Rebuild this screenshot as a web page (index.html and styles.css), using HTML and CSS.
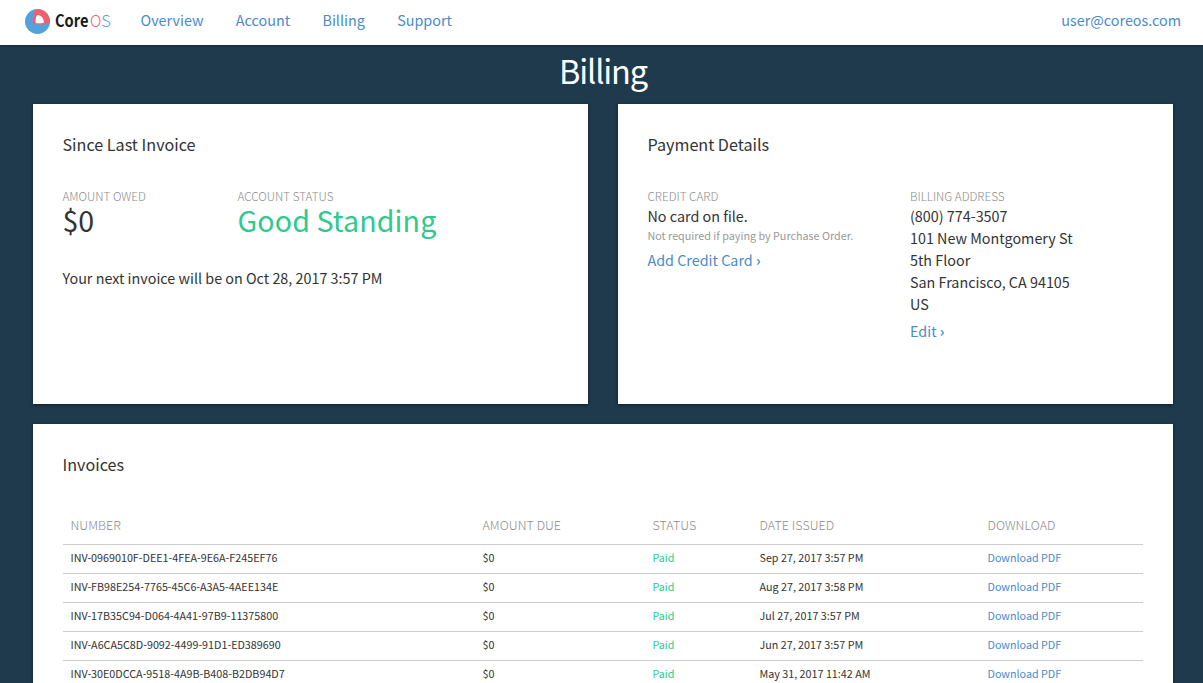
FILE: index.html
```html
<!DOCTYPE html>
<html lang="en">
<head>
<meta charset="utf-8">
<title>Billing</title>
<link rel="stylesheet" href="styles.css">
</head>
<body>
<header class="topbar">
  <svg class="logo" width="90" height="30" viewBox="0 0 90 30" role="img" aria-label="CoreOS">
    <circle cx="12.5" cy="15.5" r="12.5" fill="#53a3da"/>
    <path d="M12.500 3C9.500 3 7.500 9 7.500 17.800C13.500 19 20 18.500 24.800 17.200A12.500 12.500 0 0 0 12.500 3Z" fill="#f1606d"/>
    <path d="M12.300 9C11 9.500 10.600 13.500 10.700 17.100C13.500 17.500 16.500 17.300 18.800 16.700C19 12.500 16 8.800 12.300 9Z" fill="#fff"/>
    <text class="logo-core" x="30" y="21.300" textLength="33.500" lengthAdjust="spacingAndGlyphs">Core</text>
    <text class="logo-o" x="65" y="21.300" textLength="11.300" lengthAdjust="spacingAndGlyphs">O</text>
    <text class="logo-s" x="76.300" y="21.300">S</text>
  </svg>
  <nav class="nav">
    <a>Overview</a>
    <a>Account</a>
    <a>Billing</a>
    <a>Support</a>
  </nav>
  <a class="user">user@coreos.com</a>
</header>
<main class="page">
  <h1 class="title">Billing</h1>
  <div class="cards">
    <section class="card">
      <h2 class="card-title">Since Last Invoice</h2>
      <div class="summary">
        <div><div class="label">AMOUNT OWED</div><div class="big">$0</div></div>
        <div><div class="label">ACCOUNT STATUS</div><div class="big good">Good Standing</div></div>
      </div>
      <p class="next">Your next invoice will be on Oct 28, 2017 3:57 PM</p>
    </section>
    <section class="card">
      <h2 class="card-title">Payment Details</h2>
      <div class="payment">
        <div>
          <div class="label">CREDIT CARD</div>
          <div class="text">No card on file.</div>
          <div class="note">Not required if paying by Purchase Order.</div>
          <a class="link add">Add Credit Card <span class="chevron">›</span></a>
        </div>
        <div>
          <div class="label">BILLING ADDRESS</div>
          <div class="text">(800) 774-3507<br>101 New Montgomery St<br>5th Floor<br>San Francisco, CA 94105<br>US</div>
          <a class="link edit">Edit <span class="chevron">›</span></a>
        </div>
      </div>
    </section>
  </div>
  <section class="card invoices">
    <h2 class="card-title">Invoices</h2>
    <table class="table">
      <colgroup><col class="c-number"><col class="c-amount"><col class="c-status"><col class="c-date"><col></colgroup>
      <thead><tr><th>NUMBER</th><th>AMOUNT DUE</th><th>STATUS</th><th>DATE ISSUED</th><th>DOWNLOAD</th></tr></thead>
      <tbody>
        <tr><td>INV-0969010F-DEE1-4FEA-9E6A-F245EF76</td><td>$0</td><td class="paid">Paid</td><td>Sep 27, 2017 3:57 PM</td><td><a>Download PDF</a></td></tr>
        <tr><td>INV-FB98E254-7765-45C6-A3A5-4AEE134E</td><td>$0</td><td class="paid">Paid</td><td>Aug 27, 2017 3:58 PM</td><td><a>Download PDF</a></td></tr>
        <tr><td>INV-17B35C94-D064-4A41-97B9-11375800</td><td>$0</td><td class="paid">Paid</td><td>Jul 27, 2017 3:57 PM</td><td><a>Download PDF</a></td></tr>
        <tr><td>INV-A6CA5C8D-9092-4499-91D1-ED389690</td><td>$0</td><td class="paid">Paid</td><td>Jun 27, 2017 3:57 PM</td><td><a>Download PDF</a></td></tr>
        <tr><td>INV-30E0DCCA-9518-4A9B-B408-B2DB94D7</td><td>$0</td><td class="paid">Paid</td><td>May 31, 2017 11:42 AM</td><td><a>Download PDF</a></td></tr>
      </tbody>
    </table>
  </section>
</main>
</body>
</html>
```
FILE: styles.css
```css
* { box-sizing: border-box; }
html { height: 100%; overflow: hidden; }
body {
  margin: 0;
  height: 100%;
  overflow: hidden;
  background: #1f394d;
  color: #333;
  font-family: "Noto Sans CJK SC", "Noto Sans CJK JP", sans-serif;
  font-size: 14.35px;
  line-height: 22px;
}
h1, h2, p { margin: 0; font-weight: 400; }
a { color: #4a8bc9; }
.topbar {
  display: flex;
  align-items: flex-start;
  height: 45px;
  padding: 6px 22px 0 25px;
  background: #fff;
  box-shadow: 0 1px 2px rgba(0, 0, 0, .3);
}
.logo { display: block; }
.logo-core { font-size: 16.5px; font-weight: 600; fill: #1a1a1a; }
.logo-o, .logo-s { font-size: 16.5px; font-weight: 300; }
.logo-o { fill: #f1606d; }
.logo-s { fill: #53a3da; }
.nav { display: flex; gap: 32.4px; padding: 3px 0 0 25.5px; }
.user { margin-left: auto; padding-top: 3px; }
.page { padding: 0 30px 0 33px; }
.title {
  margin-bottom: 9px;
  color: #fff;
  font-size: 32.5px;
  letter-spacing: -1.15px;
  line-height: 50px;
  text-align: center;
}
.cards { display: grid; grid-template-columns: 1fr 1fr; gap: 30px; margin-bottom: 20px; }
.card {
  height: 300px;
  padding: 30px 30px 30px 29.5px;
  background: #fff;
  box-shadow: 0 1px 3px rgba(0, 0, 0, .5);
}
.card-title { margin-bottom: 35px; font-size: 16.15px; line-height: 20px; }
.summary { display: grid; grid-template-columns: 175px 1fr; }
.label { color: #8c8c8c; font-size: 11.7px; font-weight: 300; line-height: 14px; }
.big { font-size: 28.6px; line-height: 33px; }
.good { color: #2fc98e; letter-spacing: .1px; }
.next { margin-top: 31px; }
.payment { display: grid; grid-template-columns: 262.5px 1fr; }
.text { padding-top: 2px; }
.note { color: #999; font-size: 10.78px; line-height: 16px; }
.link { display: block; }
.chevron { font-weight: 600; }
.add { margin-top: 6px; }
.edit { margin-top: 5px; }
.invoices { height: 259px; padding-bottom: 0; overflow: hidden; }
.table { width: 1080px; margin: 41px 0 0 .5px; border-collapse: collapse; table-layout: fixed; }
.invoices .card-title { margin-bottom: 0; }
.c-number { width: 412px; }
.c-amount { width: 170px; }
.c-status { width: 107px; }
.c-date { width: 228px; }
th {
  padding: 0 7.5px 9px;
  color: #8c8c8c;
  font-size: 12.45px;
  font-weight: 300;
  letter-spacing: .06px;
  line-height: 20px;
  text-align: left;
}
td {
  padding: 0 7.5px 3px;
  border-top: 1px solid #ccc;
  font-size: 10.76px;
  line-height: 25px;
}
.paid { color: #2fc98e; }
```
